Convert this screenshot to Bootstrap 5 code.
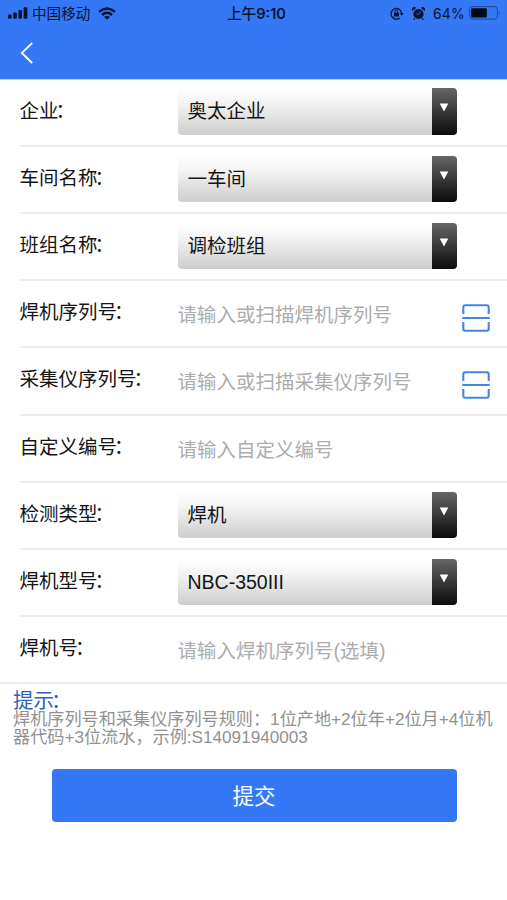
<!DOCTYPE html>
<html lang="zh-CN">
<head>
<meta charset="utf-8">
<meta name="viewport" content="width=device-width, initial-scale=1">
<title>焊机信息</title>
<link href="https://cdn.jsdelivr.net/npm/bootstrap@5.3.0/dist/css/bootstrap.min.css" rel="stylesheet">
<style>
body{font-family:"Liberation Sans","Noto Sans CJK SC",sans-serif;width:507px;height:900px;overflow:hidden;background:#fff;color:#151515}
.top-area{background:#3478f6;height:79.6px;border-bottom:1px solid #b5d0fb}
.status{height:27px;color:#071430;font-size:14.6px;line-height:28px;display:grid;grid-template-columns:1fr auto 1fr;padding:0 6px 0 8px}
.status svg{display:block}
.status .glyph{margin-bottom:2px}
.clock{font-family:Inter,"Noto Sans CJK SC",sans-serif;font-weight:600;font-size:14.6px;padding-left:4px}
.clock span{font-weight:500}
.pct{font-family:Inter,sans-serif;font-size:14px;letter-spacing:.2px;line-height:27px;margin-bottom:1px}
.titlebar{height:52px;padding-left:20px}
.field{height:67.2px;margin-left:19.5px;padding-bottom:1px;border-bottom:2px solid #ededed;font-size:19.5px}
.field:last-child{margin-left:0;padding-left:19.5px}
.field-label{width:158px;line-height:28px;padding-bottom:2px}
.colon{margin-left:-3px}
.picker{width:279px;height:46.5px;border-radius:4px;overflow:hidden;background:linear-gradient(#fff,#f4f4f4 30%,#cecece);border:0;padding:0;color:#151515;text-align:left}
.picker-text{padding-left:10px;line-height:47px}
.picker-arrow{width:25px;background:linear-gradient(#666,#383838 50%,#0c0c0c);padding-top:15px}
.picker-arrow svg{margin-right:1px}
.entry{border:0;padding:0;width:260px;height:40px;background:transparent;font-size:19.5px;outline:0;margin-top:5px}
.entry::placeholder{color:#acacac;opacity:1}
.scan{margin-left:24px;margin-top:10px}
.hint-area{padding:6px 10px 0 13px;height:84.4px}
.hint-title{font-size:20.5px;line-height:21px;color:#2c62bd}
.hint-text{font-size:17.15px;line-height:17.5px;color:#919191;white-space:nowrap}
.submit{width:405px;height:53px;margin-left:51.5px;background:#3478f6;border:0;border-radius:4px;color:#fff;font-size:21.5px;line-height:53px;padding:2px 0 0}
</style>
<script src="https://cdn.jsdelivr.net/npm/bootstrap@5.3.0/dist/js/bootstrap.bundle.min.js"></script>
</head>
<body>
<header class="top-area">
  <div class="status">
    <div class="d-flex align-items-center">
      <svg class="glyph" width="20" height="12" viewBox="0 0 20 12" fill="currentColor"><rect y="7.5" width="3.6" height="4.2" rx="1"/><rect x="5.2" y="5.5" width="3.6" height="6.2" rx="1"/><rect x="10.4" y="3" width="3.6" height="8.7" rx="1"/><rect x="15.6" y="0.3" width="3.8" height="11.4" rx="1"/></svg>
      <span class="ms-1">中国移动</span>
      <svg class="ms-2 glyph" width="18" height="13" viewBox="0 0 18 13" fill="none" stroke="currentColor" stroke-width="2.4"><path d="M1 4.8Q9-2 17 4.8M4 8Q9 3.7 14 8"/><path d="M6.2 9.9Q9 7.8 11.8 9.9L9 12.8Z" fill="currentColor" stroke="none"/></svg>
    </div>
    <div class="clock"><span>上午</span>9:10</div>
    <div class="d-flex align-items-center justify-content-end">
      <svg class="glyph" width="14" height="13" viewBox="0 0 14 13" fill="none" stroke="currentColor" stroke-width="1.3"><path d="M9.8 10.9A5.3 5.3 0 1 1 11.7 6.5"/><path d="M9.6 6.1h4.2l-2.1 2.6Z" fill="currentColor" stroke="none"/><rect x="3.9" y="5.7" width="5" height="3.8" fill="currentColor" stroke="none"/><path d="M5 6V4.7a1.4 1.4 0 0 1 2.8 0V6" stroke-width="1"/></svg>
      <svg class="ms-2 glyph" width="13" height="13" viewBox="0 0 13 13"><g fill="currentColor"><circle cx="6.5" cy="7" r="5.1"/><path d="M.5 4A2.2 2.2 0 0 1 4 1ZM12.5 4A2.2 2.2 0 0 0 9 1ZM2 11l1.4 1-1 .9-1.2-1ZM11 11l-1.4 1 1 .9 1.2-1Z"/></g><path d="M4.6 6.5 6.3 7.7 8.6 4.6" fill="none" stroke="#3478f6" stroke-width="1"/></svg>
      <span class="pct ms-2">64%</span>
      <svg class="ms-1 glyph" width="32" height="14" viewBox="0 0 32 14"><rect x=".6" y=".6" width="27.8" height="12.5" rx="2.6" fill="none" stroke="#1e488f"/><rect x="2.2" y="2.2" width="15.6" height="9.3" rx="1" fill="#020817"/><path d="M29.8 4.6q1.8 2.2 0 4.5Z" fill="#1e488f"/></svg>
    </div>
  </div>
  <div class="titlebar d-flex align-items-center">
    <svg width="14" height="22" viewBox="0 0 14 22" fill="none" stroke="#fff" stroke-width="1.8"><path d="M12.2 1 1.8 11l10.4 10"/></svg>
  </div>
</header>
<main>
  <form>
    <div class="field d-flex align-items-center"><div class="field-label">企业<span class="colon">：</span></div><button type="button" class="picker d-flex"><span class="picker-text flex-grow-1">奥太企业</span><span class="picker-arrow d-flex justify-content-center"><svg width="10" height="9" viewBox="0 0 10 9"><path d="M.7.5h8.6L5 8.5Z" fill="#fff"/></svg></span></button></div>
    <div class="field d-flex align-items-center"><div class="field-label">车间名称<span class="colon">：</span></div><button type="button" class="picker d-flex"><span class="picker-text flex-grow-1">一车间</span><span class="picker-arrow d-flex justify-content-center"><svg width="10" height="9" viewBox="0 0 10 9"><path d="M.7.5h8.6L5 8.5Z" fill="#fff"/></svg></span></button></div>
    <div class="field d-flex align-items-center"><div class="field-label">班组名称<span class="colon">：</span></div><button type="button" class="picker d-flex"><span class="picker-text flex-grow-1">调检班组</span><span class="picker-arrow d-flex justify-content-center"><svg width="10" height="9" viewBox="0 0 10 9"><path d="M.7.5h8.6L5 8.5Z" fill="#fff"/></svg></span></button></div>
    <div class="field d-flex align-items-center"><div class="field-label">焊机序列号<span class="colon">：</span></div><input class="entry" placeholder="请输入或扫描焊机序列号"><svg class="scan" width="28" height="28" viewBox="0 0 28 28" fill="none" stroke="#4285e8" stroke-width="2.1"><path d="M1.3 10V3.2Q1.3 1.3 3.2 1.3H24.8Q26.7 1.3 26.7 3.2V10M.3 14H27.7M1.3 18V24.8Q1.3 26.7 3.2 26.7H24.8Q26.7 26.7 26.7 24.8V18"/></svg></div>
    <div class="field d-flex align-items-center"><div class="field-label">采集仪序列号<span class="colon">：</span></div><input class="entry" placeholder="请输入或扫描采集仪序列号"><svg class="scan" width="28" height="28" viewBox="0 0 28 28" fill="none" stroke="#4285e8" stroke-width="2.1"><path d="M1.3 10V3.2Q1.3 1.3 3.2 1.3H24.8Q26.7 1.3 26.7 3.2V10M.3 14H27.7M1.3 18V24.8Q1.3 26.7 3.2 26.7H24.8Q26.7 26.7 26.7 24.8V18"/></svg></div>
    <div class="field d-flex align-items-center"><div class="field-label">自定义编号<span class="colon">：</span></div><input class="entry" placeholder="请输入自定义编号"></div>
    <div class="field d-flex align-items-center"><div class="field-label">检测类型<span class="colon">：</span></div><button type="button" class="picker d-flex"><span class="picker-text flex-grow-1">焊机</span><span class="picker-arrow d-flex justify-content-center"><svg width="10" height="9" viewBox="0 0 10 9"><path d="M.7.5h8.6L5 8.5Z" fill="#fff"/></svg></span></button></div>
    <div class="field d-flex align-items-center"><div class="field-label">焊机型号<span class="colon">：</span></div><button type="button" class="picker d-flex"><span class="picker-text flex-grow-1">NBC-350III</span><span class="picker-arrow d-flex justify-content-center"><svg width="10" height="9" viewBox="0 0 10 9"><path d="M.7.5h8.6L5 8.5Z" fill="#fff"/></svg></span></button></div>
    <div class="field d-flex align-items-center"><div class="field-label">焊机号<span class="colon">：</span></div><input class="entry" placeholder="请输入焊机序列号(选填)"></div>
  </form>
  <section class="hint-area">
    <div class="hint-title">提示<span class="colon">：</span></div>
    <div class="hint-text">焊机序列号和采集仪序列号规则：1位产地+2位年+2位月+4位机<br>器代码+3位流水，示例:S14091940003</div>
  </section>
  <button type="button" class="submit d-block">提交</button>
</main>
</body>
</html>
